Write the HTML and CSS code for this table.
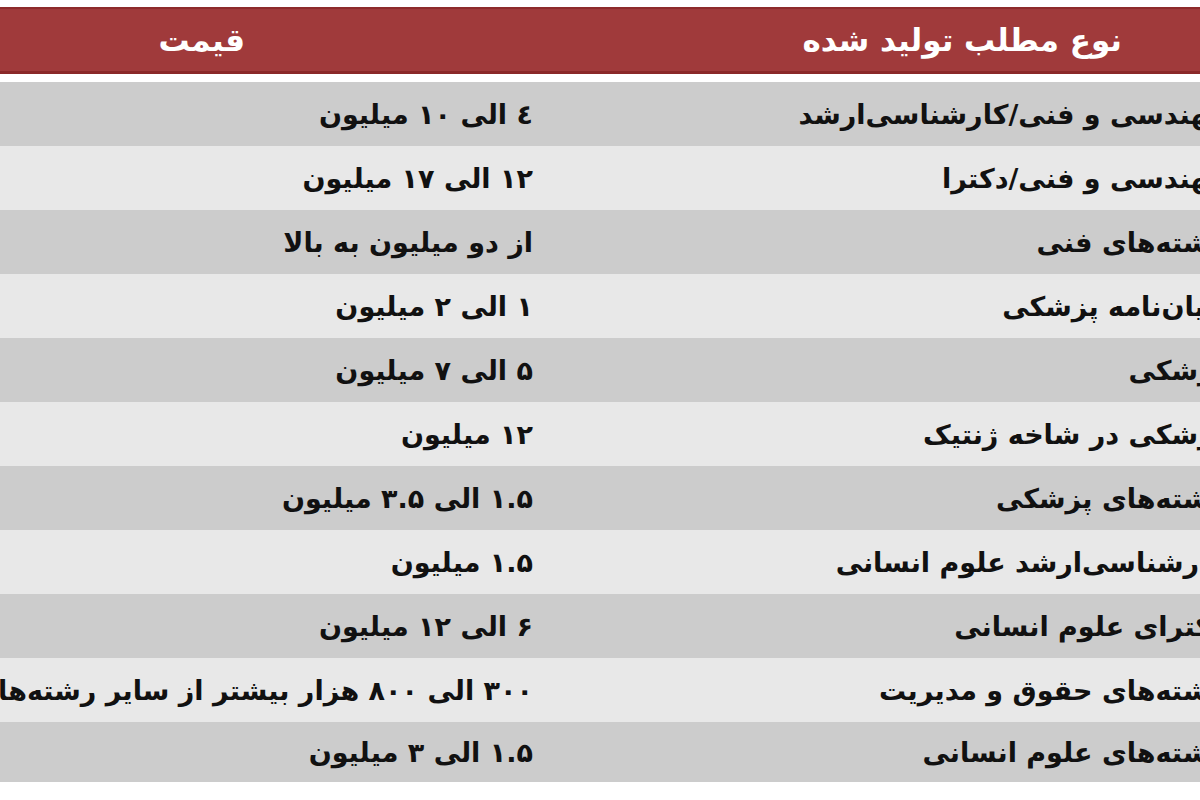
FILE: index.html
```html
<!DOCTYPE html>
<html lang="fa">
<head>
<meta charset="utf-8">
<title>قیمت</title>
<link rel="stylesheet" href="styles.css">
</head>
<body>
<div class="page">
  <div class="table" dir="rtl">
    <div class="row head">
      <div class="cell subject">نوع مطلب تولید شده</div>
      <div class="cell price">قیمت</div>
    </div>
    <div class="row dark"><div class="cell subject">مهندسی و فنی/کارشناسی‌ارشد</div><div class="cell price">٤ الی ۱۰ میلیون</div></div>
    <div class="row light"><div class="cell subject">مهندسی و فنی/دکترا</div><div class="cell price">۱۲ الی ۱۷ میلیون</div></div>
    <div class="row dark"><div class="cell subject">رشته‌های فنی</div><div class="cell price">از دو میلیون به بالا</div></div>
    <div class="row light"><div class="cell subject">پایان‌نامه پزشکی</div><div class="cell price">۱ الی ۲ میلیون</div></div>
    <div class="row dark"><div class="cell subject">پزشکی</div><div class="cell price">۵ الی ۷ میلیون</div></div>
    <div class="row light"><div class="cell subject">پزشکی در شاخه ژنتیک</div><div class="cell price">۱۲ میلیون</div></div>
    <div class="row dark"><div class="cell subject">رشته‌های پزشکی</div><div class="cell price">۱.۵ الی ۳.۵ میلیون</div></div>
    <div class="row light"><div class="cell subject">کارشناسی‌ارشد علوم انسانی</div><div class="cell price">۱.۵ میلیون</div></div>
    <div class="row dark"><div class="cell subject">دکترای علوم انسانی</div><div class="cell price">۶ الی ۱۲ میلیون</div></div>
    <div class="row light"><div class="cell subject">رشته‌های حقوق و مدیریت</div><div class="cell price">۳۰۰ الی ۸۰۰ هزار بیشتر از سایر رشته‌ها</div></div>
    <div class="row dark last"><div class="cell subject">رشته‌های علوم انسانی</div><div class="cell price">۱.۵ الی ۳ میلیون</div></div>
  </div>
</div>
</body>
</html>
```
FILE: styles.css
```css
html, body {
  margin: 0;
  padding: 0;
  background: #ffffff;
  width: 1200px;
  height: 800px;
  overflow: hidden;
}
.page {
  padding-top: 7px;
}
.table {
  width: 1437px;
  margin-left: -200px;
  font-family: "DejaVu Sans", sans-serif;
  font-weight: bold;
  color: #111111;
}
.row {
  display: flex;
  height: 64px;
  align-items: center;
}
.cell {
  white-space: nowrap;
  text-align: right;
  font-size: 27px;
}
.subject {
  width: 692px;
  flex: none;
  padding-right: 12px;
  box-sizing: border-box;
}
.price {
  width: 745px;
  flex: none;
  padding-right: 12px;
  box-sizing: border-box;
}
.head {
  height: 67px;
  background: #a03a3b;
  border-top: 2px solid #8e2b2c;
  border-bottom: 3px solid #8a2829;
  box-sizing: border-box;
  margin-bottom: 8px;
  color: #ffffff;
}
.head .cell {
  font-size: 31px;
}
.head .subject {
  padding-right: 115px;
}
.head .price {
  padding-right: 300px;
}
.dark {
  background: #cccccc;
}
.light {
  background: #e8e8e8;
}
.last {
  height: 60px;
}
```
